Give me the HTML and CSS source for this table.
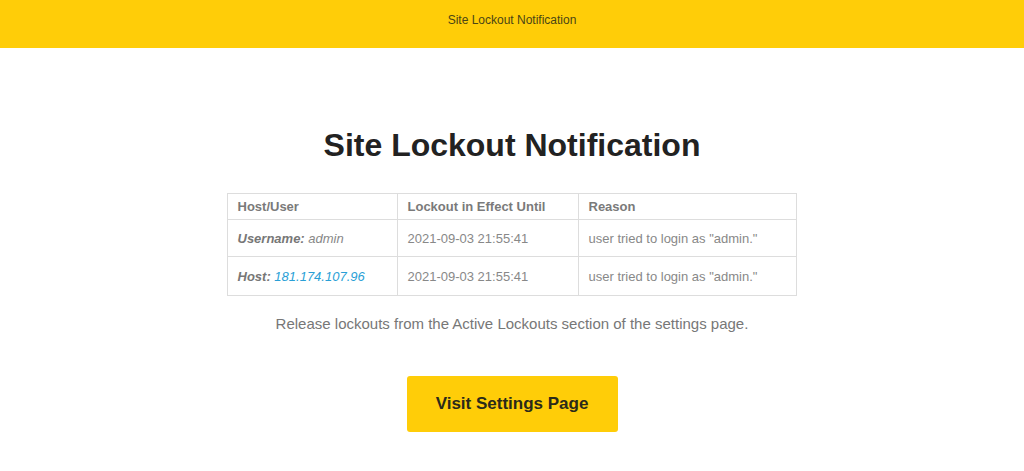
FILE: index.html
```html
<!DOCTYPE html>
<html>
<head>
<meta charset="utf-8">
<link rel="stylesheet" href="styles.css">
</head>
<body>
<header class="topbar">Site Lockout Notification</header>
<main class="content">
  <h1 class="title">Site Lockout Notification</h1>
  <table class="locks">
    <thead>
      <tr><th class="c1">Host/User</th><th class="c2">Lockout in Effect Until</th><th class="c3">Reason</th></tr>
    </thead>
    <tbody>
      <tr><td><b><i>Username:</i></b> <i>admin</i></td><td>2021-09-03 21:55:41</td><td>user tried to login as "admin."</td></tr>
      <tr><td><b><i>Host:</i></b> <a class="ip" href="#">181.174.107.96</a></td><td>2021-09-03 21:55:41</td><td>user tried to login as "admin."</td></tr>
    </tbody>
  </table>
  <p class="note">Release lockouts from the Active Lockouts section of the settings page.</p>
  <a class="btn" href="#">Visit Settings Page</a>
</main>
</body>
</html>
```
FILE: styles.css
```css
html, body { margin: 0; padding: 0; background: #fff; }
body { font-family: "Liberation Sans", Arial, sans-serif; color: #777; }
.topbar {
  background: #ffcd08;
  height: 48px;
  display: flex;
  align-items: center;
  justify-content: center;
  font-size: 12px;
  color: #4a4516;
  padding-bottom: 9px;
  box-sizing: border-box;
}
.content { display: flex; flex-direction: column; align-items: center; }
.title {
  margin: 79px 0 29px;
  font-size: 32px;
  line-height: 37px;
  font-weight: bold;
  color: #222;
}
.locks {
  border-collapse: collapse;
  width: 570px;
  margin-left: -1px;
  font-size: 13px;
  line-height: 15px;
}
.locks th, .locks td {
  border: 1px solid #ddd;
  text-align: left;
  padding: 0 10px;
}
.locks th { height: 25px; font-weight: bold; color: #7a7a7a; }
.locks td { height: 36px; color: #888; }
.locks tbody tr:last-child td { height: 38px; }
.c1 { width: 149px; }
.c2 { width: 160px; }
.c3 { width: 197px; }
.locks b { color: #777; }
.ip { color: #2a9fd6; text-decoration: none; font-style: italic; }
.note { margin: 19px 0 0; font-size: 15px; line-height: 18px; color: #777; }
.btn {
  margin-top: 43px;
  width: 211px;
  height: 56px;
  display: flex;
  align-items: center;
  justify-content: center;
  background: #ffcd08;
  border-radius: 3px;
  color: #2a2a1a;
  font-weight: bold;
  font-size: 17px;
  text-decoration: none;
}
```
